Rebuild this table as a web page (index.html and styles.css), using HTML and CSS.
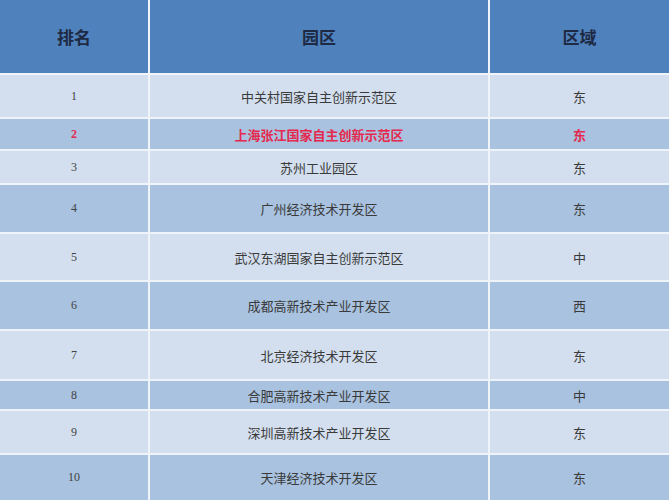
FILE: index.html
```html
<!DOCTYPE html>
<html lang="zh">
<head>
<meta charset="utf-8">
<link rel="stylesheet" href="styles.css">
</head>
<body>
<div class="table">
  <div class="cell head">排名</div><div class="cell head">园区</div><div class="cell head">区域</div>
  <div class="cell light num">1</div><div class="cell light">中关村国家自主创新示范区</div><div class="cell light">东</div>
  <div class="cell dark num hl">2</div><div class="cell dark hl">上海张江国家自主创新示范区</div><div class="cell dark hl">东</div>
  <div class="cell light num">3</div><div class="cell light">苏州工业园区</div><div class="cell light">东</div>
  <div class="cell dark num">4</div><div class="cell dark">广州经济技术开发区</div><div class="cell dark">东</div>
  <div class="cell light num">5</div><div class="cell light">武汉东湖国家自主创新示范区</div><div class="cell light">中</div>
  <div class="cell dark num">6</div><div class="cell dark">成都高新技术产业开发区</div><div class="cell dark">西</div>
  <div class="cell light num">7</div><div class="cell light">北京经济技术开发区</div><div class="cell light">东</div>
  <div class="cell dark num">8</div><div class="cell dark">合肥高新技术产业开发区</div><div class="cell dark">中</div>
  <div class="cell light num">9</div><div class="cell light">深圳高新技术产业开发区</div><div class="cell light">东</div>
  <div class="cell dark num">10</div><div class="cell dark">天津经济技术开发区</div><div class="cell dark">东</div>
</div>
</body>
</html>
```
FILE: styles.css
```css
html, body {
  margin: 0;
  padding: 0;
  background: #ffffff;
}
.table {
  display: grid;
  width: 669px;
  height: 500px;
  grid-template-columns: 148px 338px 1fr;
  grid-template-rows: 73px 42px 30px 32px 47px 46px 47px 48px 28px 42px 45px;
  gap: 2px;
  background: #eef4fa;
  overflow: hidden;
  font-family: "Noto Sans CJK SC", "Noto Sans", sans-serif;
  font-size: 13px;
  color: #3a3a3a;
}
.cell {
  display: flex;
  align-items: center;
  justify-content: center;
}
.head {
  background: #4f81bd;
  color: #1e2a44;
  font-size: 17px;
  font-weight: bold;
}
.light {
  background: #d3dfee;
}
.dark {
  background: #a8c2df;
}
.num {
  font-family: "Liberation Serif", "DejaVu Serif", serif;
  font-size: 12px;
  color: #444;
}
.hl {
  color: #e5284e;
  font-weight: bold;
}
```
